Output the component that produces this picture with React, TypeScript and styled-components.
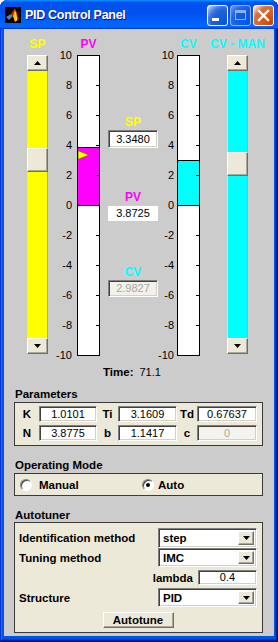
import React from 'react'
import styled, { createGlobalStyle } from 'styled-components'

const GlobalStyle = createGlobalStyle`
  html, body {
    margin: 0;
    padding: 0;
    background: #fff;
  }
  body {
    width: 278px;
    height: 642px;
    overflow: hidden;
    font-family: "Liberation Sans", Arial, sans-serif;
  }
  * { box-sizing: border-box; }
`;

const YELLOW = '#ffff00';
const MAGENTA = '#ff00ff';
const CYAN = '#00ffff';
const BEIGE = '#ece9d8';

const Window = styled.div`
  width: 278px;
  height: 642px;
  display: flex;
  flex-direction: column;
  background: #0054e3;
  border-radius: 8px 8px 0 0;
  overflow: hidden;
  box-shadow: inset -1px -1px #00138c, inset 1px 1px #0831d9, inset -2px -2px #001ea0,
    inset 2px 2px #166aee, inset -3px -3px #003bda, inset 3px 3px #0855dd;
`;

const TitleBar = styled.div`
  height: 29px;
  display: flex;
  align-items: center;
  padding: 0 4px 0 5px;
  border-radius: 7px 7px 0 0;
  background: linear-gradient(180deg, #0997ff, #0053ee 8%, #0050ee 40%, #06f 88%, #06f 93%, #005bff 95%, #003dd7 96%, #003dd7);
`;

const Title = styled.span`
  flex: 1;
  margin-left: 4px;
  color: #fff;
  font-weight: bold;
  font-size: 12.5px;
  letter-spacing: -0.3px;
  text-shadow: 1px 1px #0f1089;
`;

const CaptionButtons = styled.div`
  display: flex;
  gap: 2px;
  margin-top: 2px;
`;

const CaptionButton = styled.div<{ $kind: 'min' | 'max' | 'close' }>`
  width: 21px;
  height: 21px;
  border-radius: 3px;
  border: 1px solid #fff;
  display: flex;
  align-items: center;
  justify-content: center;
  opacity: ${p => (p.$kind === 'max' ? 0.55 : 1)};
  background: ${p =>
    p.$kind === 'close'
      ? 'radial-gradient(circle at 90% 90%, #cc4600 0%, #dc6527 55%, #cd7546 70%, #ffccb2 90%, #fff 100%)'
      : 'radial-gradient(circle at 90% 90%, #0054e9 0%, #2263d5 55%, #4479e4 70%, #a3bbec 90%, #fff 100%)'};
`;

const Client = styled.div`
  flex: 1;
  margin: 0 4px 6px;
  background: #cccccc;
  display: flex;
  flex-direction: column;
`;

/* ---------- gauges ---------- */

const GaugeRow = styled.div`
  display: flex;
  align-items: flex-start;
  height: 333px;
  padding-left: 23px;
`;

const Column = styled.div<{ $width: number; $ml?: number }>`
  width: ${p => p.$width}px;
  margin-left: ${p => p.$ml ?? 0}px;
  display: flex;
  flex-direction: column;
`;

const Header = styled.div<{ $color: string }>`
  height: 26px;
  padding-top: 8px;
  display: flex;
  justify-content: center;
  white-space: nowrap;
  font-weight: bold;
  font-size: 12px;
  line-height: 14px;
  color: ${p => p.$color};
`;

const ScaleLabels = styled.div<{ $ml?: number }>`
  width: 16px;
  height: 314px;
  margin-top: 19px;
  margin-left: ${p => p.$ml ?? 0}px;
  display: flex;
  flex-direction: column;
  justify-content: space-between;
  font-size: 11px;
  line-height: 14px;
  text-align: right;
  white-space: nowrap;
  color: #000;
`;

const Bar = styled.div`
  position: relative;
  width: 23px;
  height: 301px;
  border: 1px solid #000;
  background: #fff;
`;

const Fill = styled.div<{ $color: string }>`
  position: absolute;
  left: 0;
  right: 0;
  background: ${p => p.$color};
  border-top: 1px solid #000;
  border-bottom: 1px solid #000;
`;

const Tick = styled.div`
  position: absolute;
  right: 0;
  width: 3px;
  height: 1px;
  background: #000;
`;

const Marker = styled.svg`
  position: absolute;
  left: 0;
`;

const SliderBox = styled.div`
  width: 21px;
  height: 299px;
  display: flex;
  flex-direction: column;
`;

const Raised = styled.div`
  background: ${BEIGE};
  border: 1px solid;
  border-color: #fff #716f64 #716f64 #fff;
  box-shadow: inset -1px -1px #aca899;
  display: flex;
  align-items: center;
  justify-content: center;
`;

const ArrowButton = styled(Raised)`
  height: 16px;
`;

const Track = styled.div<{ $color: string }>`
  position: relative;
  flex: 1;
  background: ${p => p.$color};
  border-left: 1px solid #dedede;
  border-right: 1px solid #a8a8a8;
`;

const Thumb = styled(Raised)`
  position: absolute;
  left: -1px;
  right: -1px;
  height: 24px;
`;

const Readouts = styled.div`
  width: 50px;
  margin-left: 8px;
  padding-top: 86px;
  display: flex;
  flex-direction: column;
`;

const ReadoutLabel = styled.div<{ $color: string; $mt: number }>`
  margin-top: ${p => p.$mt}px;
  text-align: center;
  font-weight: bold;
  font-size: 12px;
  line-height: 14px;
  color: ${p => p.$color};
`;

const Sunken = styled.div`
  border: 1px solid;
  border-color: #808080 #fff #fff #808080;
  box-shadow: inset 1px 1px #404040, inset -1px -1px #d4d0c8;
`;

const ReadoutBox = styled(Sunken)<{ $h: number; $mt: number; $variant: 'edit' | 'plain' | 'off' }>`
  height: ${p => p.$h}px;
  margin-top: ${p => p.$mt}px;
  font-size: 11px;
  line-height: ${p => p.$h - 2}px;
  text-align: center;
  background: ${p => (p.$variant === 'off' ? '#f2f1ea' : '#fff')};
  color: ${p => (p.$variant === 'off' ? '#a8a8a0' : '#000')};
  ${p => (p.$variant === 'plain' ? 'border-color: #fff; box-shadow: none;' : '')}
`;

const TimeRow = styled.div`
  margin-top: 3px;
  padding-left: 99px;
  display: flex;
  gap: 6px;
  font-size: 11px;
  line-height: 14px;
  b { font-size: 11.5px; }
`;

/* ---------- panels ---------- */

const Sections = styled.div`
  padding: 0 11px 0 10px;
  display: flex;
  flex-direction: column;
`;

const Heading = styled.div<{ $mt: number }>`
  margin-top: ${p => p.$mt}px;
  padding-left: 1px;
  font-weight: bold;
  font-size: 11.5px;
  line-height: 14px;
`;

const Panel = styled.div`
  background: ${BEIGE};
  border: 1px solid #3a3a3a;
`;

const ParamGrid = styled(Panel)`
  margin-top: 1px;
  height: 44px;
  padding: 3px 5px 4px 0;
  display: grid;
  grid-template-columns: 24px 58px 21px 59px 20px 60px;
  grid-template-rows: 16px 16px;
  row-gap: 3px;
`;

const ParamLabel = styled.div`
  text-align: center;
  font-weight: bold;
  font-size: 11.5px;
  line-height: 16px;
`;

const Field = styled(Sunken)<{ $disabled?: boolean; $width?: number }>`
  height: ${p => (p.$width ? 15 : 16)}px;
  ${p => (p.$width ? `width: ${p.$width}px;` : '')}
  background: ${p => (p.$disabled ? '#f4f3ee' : '#fff')};
  color: ${p => (p.$disabled ? '#aca899' : '#000')};
  font-weight: normal;
  font-size: 11px;
  line-height: ${p => (p.$width ? 13 : 14)}px;
  text-align: center;
`;

const ModePanel = styled(Panel)`
  margin-top: 1px;
  height: 23px;
  padding-left: 5px;
  display: grid;
  grid-template-columns: 122px 1fr;
  align-items: center;
`;

const RadioItem = styled.div<{ $gap: number }>`
  display: flex;
  align-items: center;
  gap: ${p => p.$gap}px;
  font-weight: bold;
  font-size: 11.5px;
`;

const RadioCircle = styled.span<{ $checked?: boolean }>`
  width: 12px;
  height: 12px;
  border-radius: 50%;
  background: #fff;
  border: 1px solid;
  border-color: #808080 #fff #fff #808080;
  box-shadow: inset 1px 1px #404040;
  display: flex;
  align-items: center;
  justify-content: center;
  &::after {
    content: '';
    width: 4px;
    height: 4px;
    border-radius: 50%;
    background: ${p => (p.$checked ? '#000' : 'transparent')};
  }
`;

const TunerPanel = styled(Panel)`
  height: 111px;
  padding: 5px 5px 4px 4px;
  display: flex;
  flex-direction: column;
`;

const TunerRow = styled.div<{ $h: number; $mt?: number; $end?: boolean }>`
  height: ${p => p.$h}px;
  margin-top: ${p => p.$mt ?? 0}px;
  display: flex;
  align-items: center;
  justify-content: ${p => (p.$end ? 'flex-end' : 'space-between')};
  gap: 5px;
  font-weight: bold;
  font-size: 11.5px;
`;

const Select = styled(Sunken)`
  width: 99px;
  height: 100%;
  display: flex;
  align-items: stretch;
  background: #fff;
  padding: 2px;
`;

const SelectValue = styled.span`
  flex: 1;
  display: flex;
  align-items: center;
  padding-left: 2px;
`;

const SelectButton = styled(Raised)`
  width: 16px;
`;

const ButtonRow = styled.div`
  margin-top: 5px;
  display: flex;
  justify-content: center;
`;

const PushButton = styled(Raised)`
  width: 71px;
  height: 16px;
  font-weight: bold;
  font-size: 11.5px;
`;

/* ---------- pieces ---------- */

const Arrow = ({ up }: { up?: boolean }) => (
  <svg width="7" height="4" viewBox="0 0 7 4">
    <polygon points={up ? '0,4 3.5,0 7,4' : '0,0 7,0 3.5,4'} fill="#000" />
  </svg>
);

const yOf = (v: number) => Math.round((10 - v) * 15); // offset from bar outer top

const Slider = ({ color, value }: { color: string; value: number }) => (
  <SliderBox>
    <ArrowButton><Arrow up /></ArrowButton>
    <Track $color={color}>
      <Thumb style={{ top: Math.round((10 - value) * 11.58) }} />
    </Track>
    <ArrowButton><Arrow /></ArrowButton>
  </SliderBox>
);

const Gauge = ({ color, value, marker }: { color: string; value: number; marker?: number }) => {
  const top = yOf(value) - 1;
  const zero = yOf(0) - 1;
  return (
    <Bar>
      <Fill $color={color} style={{ top, height: zero - top + 1 }} />
      {[8, 6, 4, 2, 0, -2, -4, -6, -8].map(t => (
        <Tick key={t} style={{ top: yOf(t) - 1 }} />
      ))}
      {marker !== undefined && (
        <Marker width="12" height="10" viewBox="0 0 12 10" style={{ top: yOf(marker) - 6 }}>
          <polygon points="0,0.5 11,5 0,9.5" fill={YELLOW} stroke="#6b6b00" strokeWidth="0.8" />
        </Marker>
      )}
    </Bar>
  );
};

const scale = ['10', '8', '6', '4', '2', '0', '-2', '-4', '-6', '-8', '-10'];

const MatlabIcon = () => (
  <svg width="16" height="16" viewBox="0 0 16 16">
    <rect width="16" height="16" fill="#000" />
    <polygon points="1,10 6,7 8,9 4,13" fill="#5b7ea8" />
    <polygon points="6,7 10,1 14,12 10,15 8,9" fill="#d81c00" />
    <polygon points="8,9 10,3 12,13 10,15" fill="#ffb400" />
    <polygon points="10,6 11,4 12,13 11,14" fill="#ffef40" />
  </svg>
);

export default function App() {
  return (
    <>
      <GlobalStyle />
      <Window>
        <TitleBar>
          <MatlabIcon />
          <Title>PID Control Panel</Title>
          <CaptionButtons>
            <CaptionButton $kind="min">
              <svg width="19" height="19" viewBox="0 0 19 19">
                <rect x="4" y="12" width="7" height="3" fill="#fff" />
              </svg>
            </CaptionButton>
            <CaptionButton $kind="max">
              <svg width="19" height="19" viewBox="0 0 19 19">
                <rect x="4.5" y="4.5" width="10" height="9" fill="none" stroke="#fff" />
                <rect x="4" y="4" width="11" height="3" fill="#fff" />
              </svg>
            </CaptionButton>
            <CaptionButton $kind="close">
              <svg width="19" height="19" viewBox="0 0 19 19">
                <path d="M5 5 L14 14 M14 5 L5 14" stroke="#fff" strokeWidth="2.4" strokeLinecap="square" />
              </svg>
            </CaptionButton>
          </CaptionButtons>
        </TitleBar>

        <Client>
          <GaugeRow>
            <Column $width={21}>
              <Header $color={YELLOW}>SP</Header>
              <Slider color={YELLOW} value={3.348} />
            </Column>
            <ScaleLabels $ml={8}>
              {scale.map(s => <span key={s}>{s}</span>)}
            </ScaleLabels>
            <Column $width={23} $ml={5}>
              <Header $color={MAGENTA}>PV</Header>
              <Gauge color={MAGENTA} value={3.8725} marker={3.348} />
            </Column>
            <Readouts>
              <ReadoutLabel $color={YELLOW} $mt={0}>SP</ReadoutLabel>
              <ReadoutBox $h={18} $mt={1} $variant="edit">3.3480</ReadoutBox>
              <ReadoutLabel $color={MAGENTA} $mt={42}>PV</ReadoutLabel>
              <ReadoutBox $h={15} $mt={2} $variant="plain">3.8725</ReadoutBox>
              <ReadoutLabel $color={CYAN} $mt={44}>CV</ReadoutLabel>
              <ReadoutBox $h={17} $mt={1} $variant="off">2.9827</ReadoutBox>
            </Readouts>
            <ScaleLabels>
              {scale.map(s => <span key={s}>{s}</span>)}
            </ScaleLabels>
            <Column $width={23} $ml={3}>
              <Header $color={CYAN}>CV</Header>
              <Gauge color={CYAN} value={2.9827} />
            </Column>
            <Column $width={21} $ml={27}>
              <Header $color={CYAN}>CV - MAN</Header>
              <Slider color={CYAN} value={2.9827} />
            </Column>
          </GaugeRow>

          <TimeRow>
            <b>Time:</b>
            <span>71.1</span>
          </TimeRow>

          <Sections>
            <Heading $mt={8}>Parameters</Heading>
            <ParamGrid>
              <ParamLabel>K</ParamLabel>
              <Field>1.0101</Field>
              <ParamLabel>Ti</ParamLabel>
              <Field>3.1609</Field>
              <ParamLabel>Td</ParamLabel>
              <Field>0.67637</Field>
              <ParamLabel>N</ParamLabel>
              <Field>3.8775</Field>
              <ParamLabel>b</ParamLabel>
              <Field>1.1417</Field>
              <ParamLabel>c</ParamLabel>
              <Field $disabled>0</Field>
            </ParamGrid>

            <Heading $mt={12}>Operating Mode</Heading>
            <ModePanel>
              <RadioItem $gap={7}>
                <RadioCircle />
                Manual
              </RadioItem>
              <RadioItem $gap={4}>
                <RadioCircle $checked />
                Auto
              </RadioItem>
            </ModePanel>

            <Heading $mt={12}>Autotuner</Heading>
            <TunerPanel>
              <TunerRow $h={20}>
                <span>Identification method</span>
                <Select>
                  <SelectValue>step</SelectValue>
                  <SelectButton><Arrow /></SelectButton>
                </Select>
              </TunerRow>
              <TunerRow $h={19}>
                <span>Tuning method</span>
                <Select>
                  <SelectValue>IMC</SelectValue>
                  <SelectButton><Arrow /></SelectButton>
                </Select>
              </TunerRow>
              <TunerRow $h={15} $mt={3} $end>
                <span>lambda</span>
                <Field $width={59}>0.4</Field>
              </TunerRow>
              <TunerRow $h={19} $mt={3}>
                <span>Structure</span>
                <Select>
                  <SelectValue>PID</SelectValue>
                  <SelectButton><Arrow /></SelectButton>
                </Select>
              </TunerRow>
              <ButtonRow>
                <PushButton>Autotune</PushButton>
              </ButtonRow>
            </TunerPanel>
          </Sections>
        </Client>
      </Window>
    </>
  );
}
